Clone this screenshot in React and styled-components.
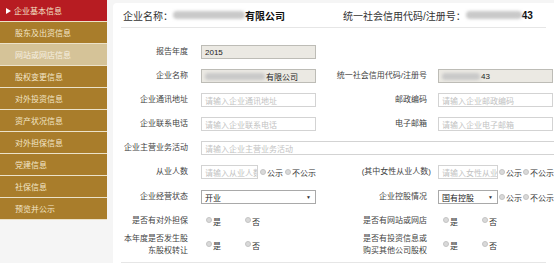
import styled, { createGlobalStyle } from "styled-components";

const GlobalStyle = createGlobalStyle`
  html, body {
    margin: 0;
    padding: 0;
    background: #f5f5f5;
  }
  body {
    font-family: "Liberation Sans", "Noto Sans CJK SC", sans-serif;
    color: #333;
  }
`;

const Page = styled.div`
  display: flex;
  align-items: flex-start;
  gap: 6px;
  width: 554px;
  height: 263px;
  overflow: hidden;
`;

const Sidebar = styled.ul`
  list-style: none;
  margin: 0;
  padding: 0;
  width: 107px;
  flex-shrink: 0;
`;

const NavItem = styled.li`
  display: flex;
  align-items: center;
  gap: 3px;
  height: 21px;
  padding-left: ${(p) => (p.$active ? "6px" : "15px")};
  border-bottom: 1px solid #ece2c9;
  font-size: 8px;
  color: ${(p) => (p.$light ? "#f6efe0" : "#f3e6c8")};
  background: ${(p) =>
    p.$active ? "#b71c22" : p.$light ? "#d5c398" : "#a97d2b"};
`;

const Arrow = styled.span`
  width: 0;
  height: 0;
  border-top: 3px solid transparent;
  border-bottom: 3px solid transparent;
  border-left: 5px solid #fff;
`;

const Card = styled.div`
  flex: 1;
  margin-top: 3px;
  background: #fff;
  border-radius: 4px 0 0 0;
  min-height: 270px;
`;

const Header = styled.div`
  display: flex;
  align-items: center;
  height: 24px;
  margin: 0 8px;
  padding-left: 2px;
  border-bottom: 1px solid #e6e6e6;
  font-size: 10px;
  color: #333;
  white-space: nowrap;
`;

const HeaderGroup = styled.div`
  display: flex;
  align-items: center;
  width: ${(p) => p.$width || "auto"};
`;

const Strong = styled.b`
  color: #111;
  font-weight: bold;
`;

const Blur = styled.span`
  display: inline-block;
  flex-shrink: 0;
  width: ${(p) => p.$w}px;
  height: ${(p) => p.$h || 9}px;
  background: #c9c9c9;
  border-radius: 4px;
  filter: blur(1.5px);
`;

const Form = styled.div`
  display: flex;
  flex-direction: column;
  padding-top: 12px;
`;

const Row = styled.div`
  display: grid;
  grid-template-columns: 88px 125px 112px 1fr;
  align-items: center;
  height: ${(p) => p.$h || 24}px;
`;

const Label = styled.div`
  text-align: right;
  padding-right: ${(p) => p.$pr || 13}px;
  font-size: 8px;
  line-height: 12px;
  color: #444;
  white-space: nowrap;
`;

const Field = styled.div`
  display: flex;
  align-items: center;
  gap: ${(p) => p.$gap || 2}px;
  white-space: nowrap;
  grid-column: ${(p) => p.$span || "auto"};
`;

const Input = styled.div`
  box-sizing: border-box;
  display: flex;
  align-items: center;
  flex-shrink: 0;
  gap: 1px;
  width: ${(p) => p.$w}px;
  height: 14px;
  padding-left: 3px;
  border: 1px solid ${(p) => (p.$readonly ? "#bdbcb6" : "#d3d3d3")};
  background: ${(p) => (p.$readonly ? "#ebe9e3" : "#fff")};
  font-size: 8px;
  color: ${(p) => (p.$placeholder ? "#c2c2c2" : "#222")};
  white-space: nowrap;
  overflow: hidden;
`;

const Select = styled(Input)`
  justify-content: space-between;
  padding-right: 4px;
  border-color: #a9a9a9;
  color: #222;
  &::after {
    content: "▼";
    font-size: 5px;
    color: #333;
  }
`;

const Radio = styled.span`
  display: inline-flex;
  align-items: center;
  flex-shrink: 0;
  gap: 1px;
  font-size: 8px;
  color: #333;
  white-space: nowrap;

  &::before {
    content: "";
    width: 6px;
    height: 6px;
    border-radius: 50%;
    background: #d9d9d9;
    border: 1px solid #c4c4c4;
    box-sizing: border-box;
    margin-top: ${(p) => (p.$low ? "-3px" : "0")};
  }
`;

const YesNo = styled.div`
  display: flex;
  align-items: center;
  padding-left: 5px;
  gap: 24px;
`;

const BottomLine = styled.div`
  margin: 4px 8px 0;
  border-bottom: 1px solid #e6e6e6;
`;

const navItems = [
  "股东及出资信息",
  "网站或网店信息",
  "股权变更信息",
  "对外投资信息",
  "资产状况信息",
  "对外担保信息",
  "党建信息",
  "社保信息",
  "预览并公示",
];

function PublicChoice() {
  return (
    <>
      <Radio>公示</Radio>
      <Radio>不公示</Radio>
    </>
  );
}

function YesNoChoice() {
  return (
    <YesNo>
      <Radio $low>是</Radio>
      <Radio $low>否</Radio>
    </YesNo>
  );
}

export default function App() {
  return (
    <>
      <GlobalStyle />
      <Page>
        <Sidebar>
          <NavItem $active>
            <Arrow />
            企业基本信息
          </NavItem>
          {navItems.map((item, i) => (
            <NavItem key={item} $light={i === 1}>
              {item}
            </NavItem>
          ))}
        </Sidebar>

        <Card>
          <Header>
            <HeaderGroup $width="220px">
              企业名称：
              <Blur $w={72} $h={8} />
              <Strong>有限公司</Strong>
            </HeaderGroup>
            <HeaderGroup>
              统一社会信用代码/注册号：
              <Blur $w={56} $h={8} />
              <Strong>43</Strong>
            </HeaderGroup>
          </Header>

          <Form>
            <Row>
              <Label>报告年度</Label>
              <Field>
                <Input $w={115} $readonly>2015</Input>
              </Field>
            </Row>
            <Row>
              <Label>企业名称</Label>
              <Field>
                <Input $w={115} $readonly>
                  <Blur $w={60} $h={7} />
                  有限公司
                </Input>
              </Field>
              <Label $pr={11}>统一社会信用代码/注册号</Label>
              <Field>
                <Input $w={115} $readonly>
                  <Blur $w={38} $h={7} />
                  43
                </Input>
              </Field>
            </Row>
            <Row>
              <Label>企业通讯地址</Label>
              <Field>
                <Input $w={115} $placeholder>请输入企业通讯地址</Input>
              </Field>
              <Label $pr={11}>邮政编码</Label>
              <Field>
                <Input $w={115} $placeholder>请输入企业邮政编码</Input>
              </Field>
            </Row>
            <Row>
              <Label>企业联系电话</Label>
              <Field>
                <Input $w={115} $placeholder>请输入企业联系电话</Input>
              </Field>
              <Label $pr={11}>电子邮箱</Label>
              <Field>
                <Input $w={115} $placeholder>请输入企业电子邮箱</Input>
              </Field>
            </Row>
            <Row>
              <Label>企业主营业务活动</Label>
              <Field $span="2 / 5">
                <Input $w={360} $placeholder>请输入企业主营业务活动</Input>
              </Field>
            </Row>
            <Row>
              <Label>从业人数</Label>
              <Field>
                <Input $w={57} $placeholder>请输入从业人数</Input>
                <PublicChoice />
              </Field>
              <Label $pr={7}>(其中女性从业人数)</Label>
              <Field $gap={1}>
                <Input $w={60} $placeholder>请输入女性从业人数</Input>
                <PublicChoice />
              </Field>
            </Row>
            <Row $h={26}>
              <Label>企业经营状态</Label>
              <Field>
                <Select $w={115}>开业</Select>
              </Field>
              <Label $pr={11}>企业控股情况</Label>
              <Field $gap={1}>
                <Select $w={60}>国有控股</Select>
                <PublicChoice />
              </Field>
            </Row>
            <Row $h={22}>
              <Label>是否有对外担保</Label>
              <YesNoChoice />
              <Label $pr={11}>是否有网站或网店</Label>
              <YesNoChoice />
            </Row>
            <Row $h={26}>
              <Label>
                本年度是否发生股
                <br />
                东股权转让
              </Label>
              <YesNoChoice />
              <Label $pr={11}>
                是否有投资信息或
                <br />
                购买其他公司股权
              </Label>
              <YesNoChoice />
            </Row>
            <BottomLine />
          </Form>
        </Card>
      </Page>
    </>
  );
}
